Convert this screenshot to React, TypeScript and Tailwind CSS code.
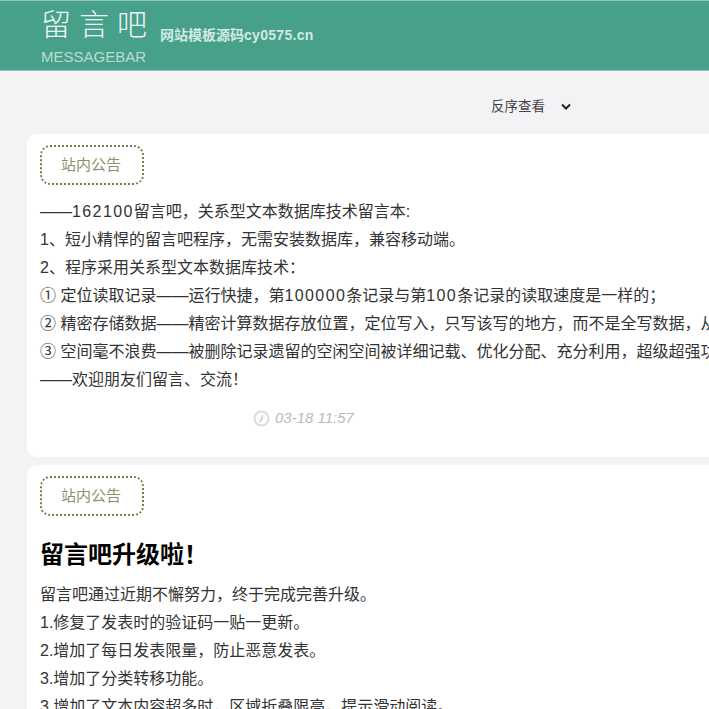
import React from "react";

const font = { fontFamily: '"Liberation Sans", "Noto Sans CJK SC", sans-serif' };

function Badge() {
  return (
    <div className="w-[104px] h-[40px] rounded-[10px] border-2 border-dotted border-[#7a7a4c] flex items-center justify-center pt-[1px] pr-[2px] text-[15px] text-[#8f8f6e]">
      站内公告
    </div>
  );
}

function Line({ children }: { children: React.ReactNode }) {
  return <p className="h-[28px] leading-[28px] text-[16px] text-[#333] whitespace-nowrap">{children}</p>;
}

function Num({ children }: { children: React.ReactNode }) {
  return <span className="tracking-[1.4px]">{children}</span>;
}

function Clock() {
  return (
    <svg width="17" height="17" viewBox="0 0 17 17" fill="none" stroke="#dcdcdc" strokeWidth="2">
      <circle cx="8.5" cy="8.5" r="7" />
      <path d="M9.5 4.5 L9 9 L6.5 12" strokeWidth="1.2" stroke="#c4c4c4" />
    </svg>
  );
}

export default function App() {
  return (
    <div className="w-[709px] h-[709px] overflow-hidden bg-[#f3f3f6] flex flex-col" style={font}>
      <header className="h-[71px] shrink-0 bg-[#46a08a] border-t border-b border-[#8fc4b6] flex pl-[41px] text-white">
        <div className="w-[118px] flex flex-col items-start">
          <div className="h-[47px] pt-[4px] text-[30px] leading-[40px] tracking-[8px] font-light text-[#eef6f3] whitespace-nowrap">留言吧</div>
          <div className="text-[15px] leading-[18px] text-[#bcdcd2] whitespace-nowrap">MESSAGEBAR</div>
        </div>
        <div className="ml-[1px] mt-[25px] text-[14px] leading-[18px] font-bold text-[#d3e9e2] whitespace-nowrap">网站模板源码<span className="tracking-[0.3px]">cy0575.cn</span></div>
      </header>
      <div className="h-[63px] shrink-0 flex items-center pt-[9px] pl-[491px] text-[13.5px] text-[#444] gap-[16px]">
        <span>反序查看</span>
        <svg width="10" height="8" viewBox="0 0 10 8" fill="none" stroke="#222" strokeWidth="2"><path d="M1 1.5 L5 5.5 L9 1.5" /></svg>
      </div>
      <main className="pl-[27px] flex flex-col gap-[8px]">
        <section className="w-[760px] h-[323px] shrink-0 bg-white rounded-l-[10px] pl-[13px] pt-[11px]">
          <Badge />
          <div className="mt-[13px]">
            <Line>——<Num>162100</Num>留言吧，关系型文本数据库技术留言本:</Line>
            <Line>1、短小精悍的留言吧程序，无需安装数据库，兼容移动端。</Line>
            <Line>2、程序采用关系型文本数据库技术：</Line>
            <Line>① 定位读取记录——运行快捷，第<Num>100000</Num>条记录与第<Num>100</Num>条记录的读取速度是一样的；</Line>
            <Line>② 精密存储数据——精密计算数据存放位置，定位写入，只写该写的地方，而不是全写数据，从</Line>
            <Line>③ 空间毫不浪费——被删除记录遗留的空闲空间被详细记载、优化分配、充分利用，超级超强功能</Line>
            <Line>——欢迎朋友们留言、交流！</Line>
          </div>
          <div className="mt-[13px] ml-[213px] flex items-center gap-[5px] text-[15px] italic text-[#bbbbbb]">
            <Clock />
            <span>03-18 11:57</span>
          </div>
        </section>
        <section className="w-[760px] h-[300px] shrink-0 bg-white rounded-l-[10px] pl-[13px] pt-[11px]">
          <Badge />
          <h2 className="mt-[19px] h-[40px] text-[24px] leading-[40px] font-bold text-black">留言吧升级啦！</h2>
          <div className="mt-[6px]">
            <Line>留言吧通过近期不懈努力，终于完成完善升级。</Line>
            <Line>1.修复了发表时的验证码一贴一更新。</Line>
            <Line>2.增加了每日发表限量，防止恶意发表。</Line>
            <Line>3.增加了分类转移功能。</Line>
            <Line>3.增加了文本内容超多时，区域折叠限高，提示滑动阅读。</Line>
          </div>
        </section>
      </main>
    </div>
  );
}
